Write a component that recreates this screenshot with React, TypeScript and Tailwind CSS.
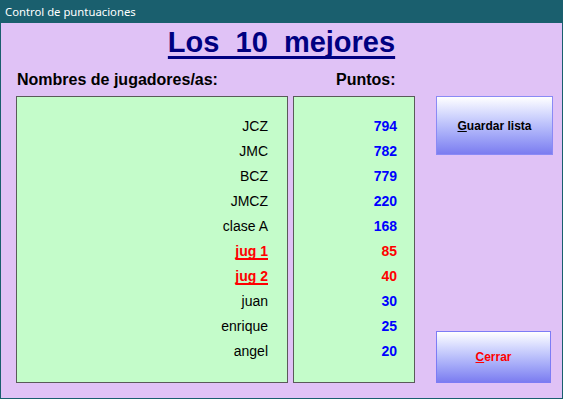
import React from "react";

const rows: { name: string; pts: number; hi?: boolean }[] = [
  { name: "JCZ", pts: 794 },
  { name: "JMC", pts: 782 },
  { name: "BCZ", pts: 779 },
  { name: "JMCZ", pts: 220 },
  { name: "clase A", pts: 168 },
  { name: "jug 1", pts: 85, hi: true },
  { name: "jug 2", pts: 40, hi: true },
  { name: "juan", pts: 30 },
  { name: "enrique", pts: 25 },
  { name: "angel", pts: 20 },
];

export default function App() {
  return (
    <div
      className="w-[563px] h-[399px] flex flex-col border border-[#1a5f6e] bg-[#e0c2f6] overflow-hidden"
      style={{ fontFamily: '"Liberation Sans", Arial, sans-serif' }}
    >
      <div
        className="h-[22px] shrink-0 bg-[#1a5f6e] text-white text-[11.3px] leading-[22px] pl-[4px]"
        style={{ fontFamily: '"Noto Sans", "Open Sans", sans-serif' }}
      >
        Control de puntuaciones
      </div>
      <div className="flex-1 flex flex-col">
        <div className="mt-[3px] h-[33px] leading-[33px] text-center text-[29px] font-bold text-[#000080] whitespace-pre">
          <span className="underline decoration-[2.5px] underline-offset-[4px] [text-decoration-skip-ink:none]">Los  10  mejores</span>
        </div>
        <div className="mt-[12px] h-[18px] leading-[18px] flex text-[16px] font-bold text-black">
          <div className="pl-[16px] w-[335px]">Nombres de jugadores/as:</div>
          <div>Puntos:</div>
        </div>
        <div className="mt-[7px] flex pl-[15px]">
          <div className="w-[272px] h-[287px] border border-[#5a5a5a] bg-[#c4fcca] pt-[17px] pr-[19px]">
            {rows.map((r) => (
              <div
                key={r.name}
                className={
                  "h-[25px] leading-[25px] text-right text-[14px] " +
                  (r.hi
                    ? "font-bold text-[#ff0000] underline decoration-2 underline-offset-[2px] [text-decoration-skip-ink:none]"
                    : "text-black")
                }
              >
                {r.name}
              </div>
            ))}
          </div>
          <div className="ml-[5px] w-[122px] h-[287px] border border-[#5a5a5a] bg-[#c4fcca] pt-[17px] pr-[17px]">
            {rows.map((r) => (
              <div
                key={r.name}
                className={
                  "h-[25px] leading-[25px] text-right text-[14px] font-bold " +
                  (r.hi ? "text-[#ff0000]" : "text-[#0000ff]")
                }
              >
                {r.pts}
              </div>
            ))}
          </div>
          <div className="ml-[21px] w-[117px] h-[287px] flex flex-col justify-between">
            <button className="w-[117px] h-[59px] border border-[#8a8af5] bg-gradient-to-b from-white to-[#7c7cf0] text-[12px] font-bold text-black">
              <span className="underline">G</span>uardar lista
            </button>
            <button className="w-[115px] h-[52px] border border-[#7c7cf5] bg-gradient-to-b from-white to-[#7c7cf0] text-[12px] font-bold text-[#ff0000]">
              <span className="underline">C</span>errar
            </button>
          </div>
        </div>
      </div>
    </div>
  );
}
